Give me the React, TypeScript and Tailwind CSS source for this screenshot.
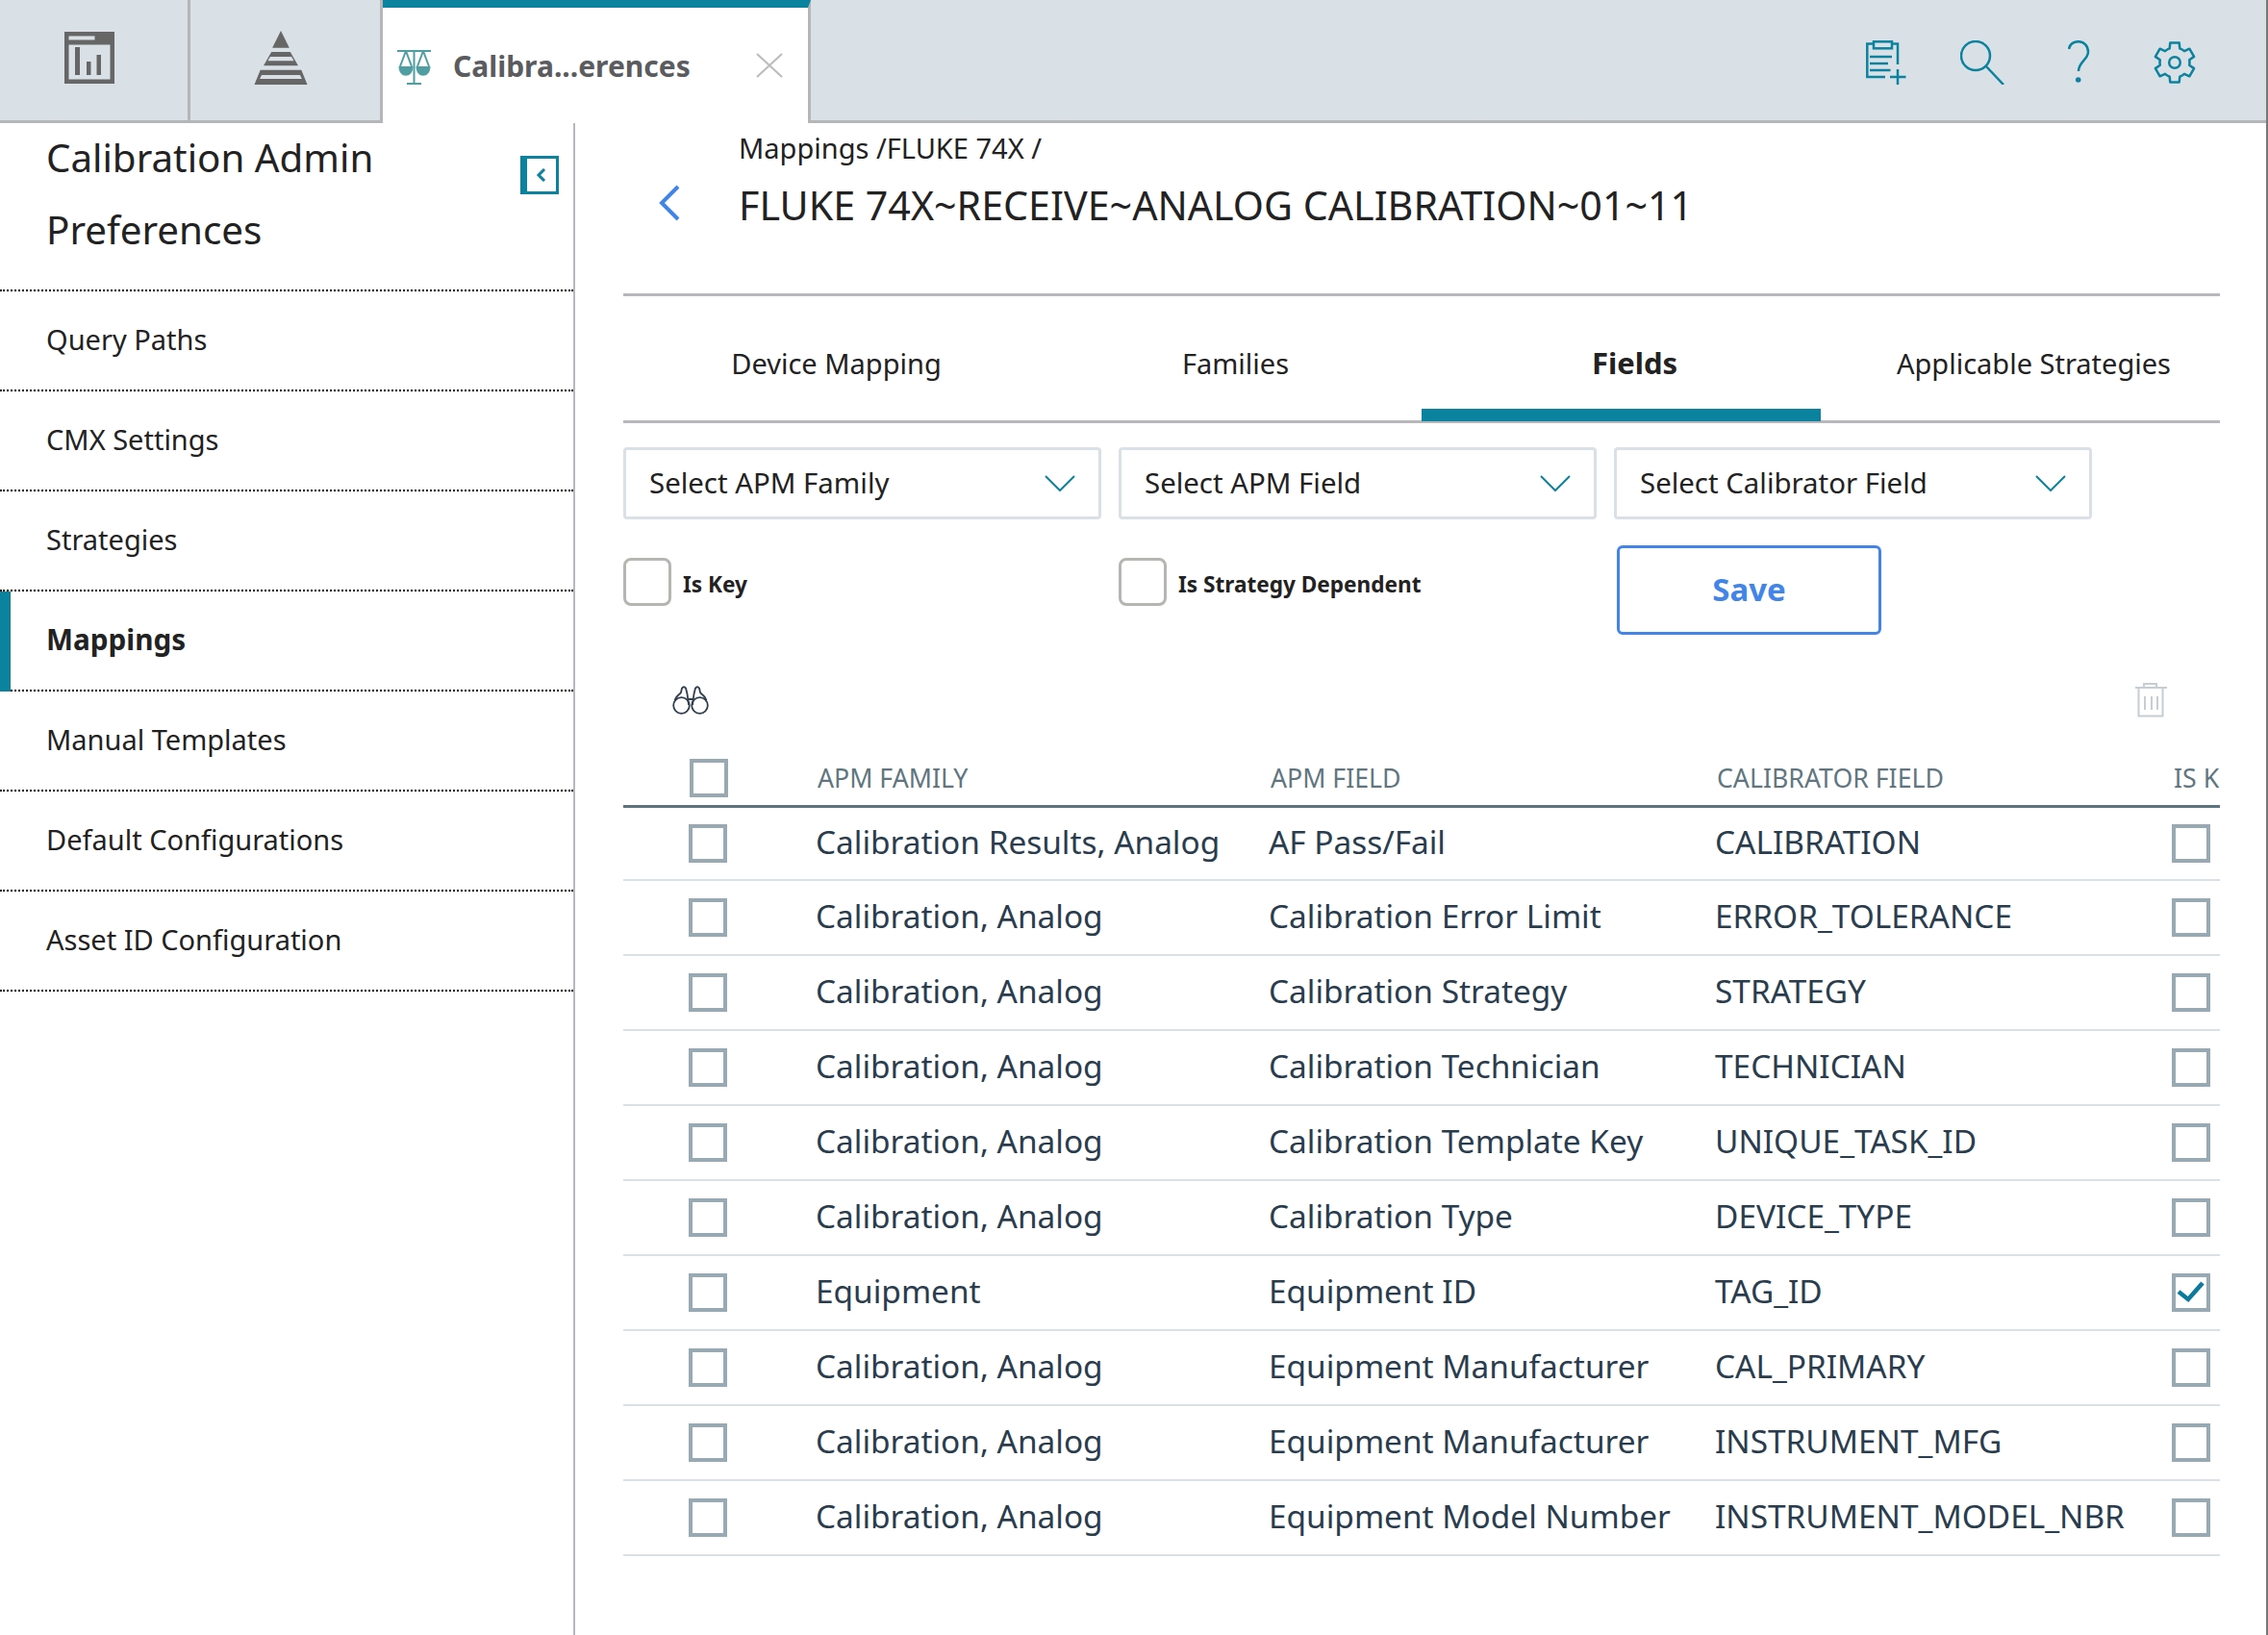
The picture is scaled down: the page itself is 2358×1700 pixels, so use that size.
const nav = ["Query Paths", "CMX Settings", "Strategies", "Mappings", "Manual Templates", "Default Configurations", "Asset ID Configuration"];
const rows: [string, string, string, boolean][] = [
  ["Calibration Results, Analog", "AF Pass/Fail", "CALIBRATION", false],
  ["Calibration, Analog", "Calibration Error Limit", "ERROR_TOLERANCE", false],
  ["Calibration, Analog", "Calibration Strategy", "STRATEGY", false],
  ["Calibration, Analog", "Calibration Technician", "TECHNICIAN", false],
  ["Calibration, Analog", "Calibration Template Key", "UNIQUE_TASK_ID", false],
  ["Calibration, Analog", "Calibration Type", "DEVICE_TYPE", false],
  ["Equipment", "Equipment ID", "TAG_ID", true],
  ["Calibration, Analog", "Equipment Manufacturer", "CAL_PRIMARY", false],
  ["Calibration, Analog", "Equipment Manufacturer", "INSTRUMENT_MFG", false],
  ["Calibration, Analog", "Equipment Model Number", "INSTRUMENT_MODEL_NBR", false],
];
const tabs = ["Device Mapping", "Families", "Fields", "Applicable Strategies"];
const selects = ["Select APM Family", "Select APM Field", "Select Calibrator Field"];

function gearPath() {
  const pt = (r: number, deg: number) => {
    const a = (deg * Math.PI) / 180;
    return `${(22 + r * Math.cos(a)).toFixed(2)} ${(23 + r * Math.sin(a)).toFixed(2)}`;
  };
  let d = "";
  for (let k = 0; k < 6; k++) {
    const a = k * 60 - 90;
    d += `${k === 0 ? "M" : "A15.5 15.5 0 0 1 "}${pt(15.5, a - 20)} L${pt(21, a - 13)} L${pt(21, a + 13)} L${pt(15.5, a + 20)} `;
  }
  return d + `A15.5 15.5 0 0 1 ${pt(15.5, -110)}Z`;
}

function Chevron() {
  return (
    <svg width="32" height="17" viewBox="0 0 32 17" fill="none" stroke="#0b829e" strokeWidth="2">
      <path d="M1 1l15 15L31 1" />
    </svg>
  );
}

function Box({ checked }: { checked?: boolean }) {
  return (
    <div className="w-[40px] h-[40px] border-[4px] border-[#98a9b3] bg-white">
      {checked && (
        <svg width="32" height="32" viewBox="4 4 32 32" fill="none" stroke="#0b7a9c" strokeWidth="4.5">
          <path d="M7 19l10 8L32 10" />
        </svg>
      )}
    </div>
  );
}

function CheckField({ label }: { label: string }) {
  return (
    <div className="flex items-center h-[50px] mt-[40px] self-start">
      <div className="w-[50px] h-[50px] rounded-[8px] border-[3px] border-[#b5b6b2] bg-white" />
      <span className="ml-[12px] mt-[6px] text-[22.6px] font-bold text-[#222]">{label}</span>
    </div>
  );
}

export default function App() {
  return (
    <div className="w-full h-[1700px] flex flex-col bg-white border-r-2 border-[#777] overflow-hidden font-['Noto_Sans',sans-serif]">
      <div className="flex h-[128px] bg-[#d9e0e6]">
        <div className="w-[198px] flex pl-[67px] pt-[33px] border-r-[3px] border-b-[3px] border-[#b5b6b8]">
          <svg width="52" height="54" viewBox="0 0 52 54" fill="#666">
            <path fillRule="evenodd" d="M0 0h52v54H0zM4.500 13.500v36h43v-36zM4.500 4.500v4h27v-4z" />
            <path d="M11 16h5v29h-5zM23 31h4.500v14H23zM33.500 24H38v21h-4.500z" />
          </svg>
        </div>
        <div className="w-[200px] flex pl-[66px] pt-[32px] border-r-[3px] border-b-[3px] border-[#b5b6b8]">
          <svg width="56" height="56" viewBox="0 0 56 57" fill="#666">
            <path d="M28 0l9 18H19z" />
            <path fillRule="evenodd" d="M18 22.500h20l8.300 14.500H9.700zM16.700 27.500l-2.500 4.200h27.600l-2.500-4.200z" />
            <path fillRule="evenodd" d="M6.300 41.500h43.400L56 57H0zM7.700 46.700l-2 4.300h44.600l-2-4.300z" />
          </svg>
        </div>
        <div className="w-[445px] h-[128px] flex items-center bg-white border-t-[8px] border-t-[#0b829e] border-r-[3px] border-[#b5b6b8] pl-[15px] relative">
          <svg width="36" height="36" viewBox="0 0 36 36" className="mt-[4px]" fill="none" stroke="#4f9ea3" strokeWidth="2">
            <path d="M0 1h35M17.500 1v34M10 35h15M9 1L3 17M9 1l6 16M27 1l-6 16M27 1l6 16" />
            <path fill="#4f9ea3" stroke="none" d="M1.500 17h15c0 13-15 13-15 0zM19.500 17h15c0 13-15 13-15 0z" />
          </svg>
          <span className="ml-[22px] text-[30px] font-bold text-[#5a5c60] whitespace-nowrap">Calibra...erences</span>
          <svg width="28" height="26" viewBox="0 0 28 26" className="ml-[68px]" fill="none" stroke="#bdbdbd" strokeWidth="2.200">
            <path d="M1 1l26 24M27 1L1 25" />
          </svg>
        </div>
        <div className="flex-1 flex border-b-[3px] border-[#b5b6b8] pt-[42px] pl-[1097px]">
          <svg width="42" height="46" viewBox="0 0 42 46" fill="none" stroke="#0b829e" strokeWidth="2.500">
            <path d="M8 3.500H1.300V38H20M27 3.500h6V25" />
            <rect x="8" y="1.300" width="19" height="7" />
            <path d="M4 17h23M4 24h19M4 31h21.500M25 38h16.500M33 30v16" />
          </svg>
          <svg width="46" height="46" viewBox="0 0 46 46" className="ml-[56px]" fill="none" stroke="#0b829e" strokeWidth="2.500">
            <circle cx="16" cy="16" r="15" />
            <path d="M27 27l18 19" />
          </svg>
          <svg width="23" height="44" viewBox="0 0 23 44" className="ml-[66px]" fill="none" stroke="#0b829e" strokeWidth="2.500">
            <path d="M1 9C2 4 6 1.200 11 1.200c6 0 10 4.800 10 10.800 0 8-10 10-10 20" />
            <circle cx="10.700" cy="41" r="2.800" fill="#0b829e" stroke="none" />
          </svg>
          <svg width="44" height="46" viewBox="0 0 44 46" className="ml-[66px]" fill="none" stroke="#0b829e" strokeWidth="2.500" strokeLinejoin="round">
            <path d={gearPath()} />
            <circle cx="22" cy="23" r="5.800" />
          </svg>
        </div>
      </div>

      <div className="flex flex-1">
        <div className="w-[598px] shrink-0 border-r-2 border-[#b8b8bc]">
          <div className="h-[175px] flex justify-between border-b-2 border-dotted border-black pl-[48px] pr-[15px]">
            <div className="text-[40.3px] leading-[75px] text-[#222] mt-[-2px]">Calibration Admin<br />Preferences</div>
            <div className="w-[40px] h-[40px] mt-[34px] border-[3px] border-l-[7px] border-[#0b829e] flex items-center justify-center">
              <svg width="12" height="14" viewBox="0 0 12 14" fill="none" stroke="#0b829e" strokeWidth="3"><path d="M9 1L3 7l6 6" /></svg>
            </div>
          </div>
          {nav.map((n) => {
            const active = n === "Mappings";
            return (
              <div key={n} className="h-[104px] flex items-center border-b-2 border-dotted border-black">
                {active && <div className="w-[11px] h-[104px] bg-[#0b829e] relative z-10 self-start" />}
                <span className={active ? "mb-[2px] ml-[37px] text-[29.7px] font-bold text-[#222]" : "mb-[2px] ml-[48px] text-[29px] text-[#222]"}>{n}</span>
              </div>
            );
          })}
        </div>

        <div className="flex-1 pl-[50px] pr-[48px]">
          <div className="h-[180px] flex border-b-[3px] border-[#b8b8bc]">
            <svg width="22" height="38" viewBox="0 0 22 38" className="ml-[37px] mt-[64px]" fill="none" stroke="#3f84e8" strokeWidth="4">
              <path d="M20 2L3 19l17 17" />
            </svg>
            <div className="ml-[61px]">
              <div className="text-[29px] leading-[40px] mt-[6px] text-[#222]">Mappings /FLUKE 74X /</div>
              <div className="text-[41.2px] leading-[50px] mt-[14px] text-[#222] whitespace-nowrap">FLUKE 74X~RECEIVE~ANALOG CALIBRATION~01~11</div>
            </div>
          </div>

          <div className="grid grid-cols-4 h-[132px] border-b-[3px] border-[#b8b8bc]">
            {tabs.map((t) =>
              t === "Fields" ? (
                <div key={t} className="h-[130px] flex items-center justify-center pl-[28px] pt-[22px] text-[31px] font-bold text-[#222] border-b-[13px] border-[#0b829e]">{t}</div>
              ) : (
                <div key={t} className="flex items-center justify-center pl-[28px] pt-[9px] text-[29px] text-[#222]">{t}</div>
              ),
            )}
          </div>

          <div className="grid grid-cols-[497px_497px_497px] gap-x-[18px] mt-[25px]">
            {selects.map((s) => (
              <div key={s} className="h-[75px] flex items-center justify-between rounded-[4px] border-[3px] border-[#d9e0e6] pl-[24px] pr-[24px]">
                <span className="text-[29.4px] text-[#222]">{s}</span>
                <Chevron />
              </div>
            ))}
            <CheckField label="Is Key" />
            <CheckField label="Is Strategy Dependent" />
            <button className="mt-[27px] ml-[3px] w-[275px] h-[93px] rounded-[6px] border-[3px] border-[#4285e8] pb-[2px] text-[33px] font-bold text-[#4285e8]">Save</button>
          </div>

          <div className="flex justify-between h-[36px] mt-[50px]">
            <svg width="38" height="30" viewBox="0 0 38 30" className="ml-[51px] mt-[3px]" fill="none" stroke="#2f3f4d" strokeWidth="1.800">
              <circle cx="9.500" cy="20.500" r="8.300" />
              <circle cx="28.500" cy="20.500" r="8.300" />
              <path d="M2.500 15C4 10 8 9 9 7l1-4.500Q12 0 14 2.500l1.500 6L17 20M35.500 15C34 10 30 9 29 7l-1-4.500Q26 0 24 2.500l-1.500 6L21 20M17 14h4" />
            </svg>
            <svg width="34" height="36" viewBox="0 0 34 36" className="mr-[54px]" fill="none" stroke="#c6ced4" strokeWidth="2">
              <path d="M0 5h33M9 5V1h13v4M3.500 5v29.500h25V5M10 14v14M17 14v14M23 14v14" />
            </svg>
          </div>

          <div className="grid grid-cols-[200px_471px_464px_475px_50px] h-[51px] mt-[43px] border-b-[3px] border-[#5e7380] text-[26.7px] text-[#5f7680] whitespace-nowrap">
            <div className="pl-[69px]"><Box /></div>
            <div className="pl-[2px]">APM FAMILY</div>
            <div className="pl-[2px]">APM FIELD</div>
            <div className="pl-[2px]">CALIBRATOR FIELD</div>
            <div className="pl-[2px]">IS K</div>
          </div>

          {rows.map((r, i) => (
            <div key={i} className={(i === 0 ? "h-[76px] " : "h-[78px] ") + "grid grid-cols-[200px_471px_464px_475px_50px] items-center border-b-2 border-[#d9e0e6] text-[33.4px] text-[#2a3d4e] whitespace-nowrap"}>
              <div className="pl-[68px]"><Box /></div>
              <div className="mb-[4px]">{r[0]}</div>
              <div className="mb-[4px]">{r[1]}</div>
              <div className="mb-[4px]">{r[2]}</div>
              <div><Box checked={r[3]} /></div>
            </div>
          ))}
        </div>
      </div>
    </div>
  );
}
